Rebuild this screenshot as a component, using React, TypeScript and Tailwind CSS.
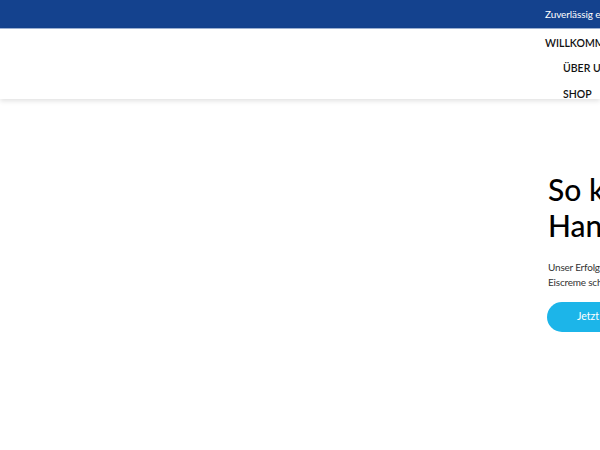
import React from "react";

export default function App() {
  return (
    <div className="w-[600px] h-[450px] overflow-hidden bg-white relative" style={{ fontFamily: "Lato, 'Noto Sans', sans-serif" }}>
      <div className="h-[29px] bg-[#14428e] border-b border-[#9fb3d6] flex items-center pl-[545px] whitespace-nowrap">
        <span className="text-white text-[10px] tracking-[-0.1px]">Zuverlässig eisgekühlt geliefert – deutschlandweit</span>
      </div>
      <header className="h-[70px] bg-white shadow-[0_2px_5px_rgba(0,0,0,0.12)] relative z-10 pl-[545px] pt-[1px] whitespace-nowrap">
        <ul className="flex flex-col text-[10.5px] font-semibold uppercase text-[#111] tracking-[0px]">
          <li className="h-[26px] flex items-center pt-[1px]">Willkommen</li>
          <li className="h-[26px] flex items-center pl-[18px]">Über uns</li>
          <li className="h-[26px] flex items-center pl-[18px]">Shop</li>
        </ul>
      </header>
      <section className="pl-[548px] pt-[72px] whitespace-nowrap">
        <h1 className="text-[30px] leading-[36px] font-medium text-black">
          So kommt Ihr<br />Handwerk an
        </h1>
        <p className="mt-[17px] text-[10px] leading-[15px] text-[#333] tracking-[-0.2px]">
          Unser Erfolgsrezept für Ihre<br />Eiscreme schnell und sicher
        </p>
        <button className="mt-[12px] -ml-[1px] h-[30px] w-[140px] rounded-full bg-[#1cb5e9] text-white text-[10.5px] flex items-center pl-[30px]">
          Jetzt bestellen
        </button>
      </section>
    </div>
  );
}
